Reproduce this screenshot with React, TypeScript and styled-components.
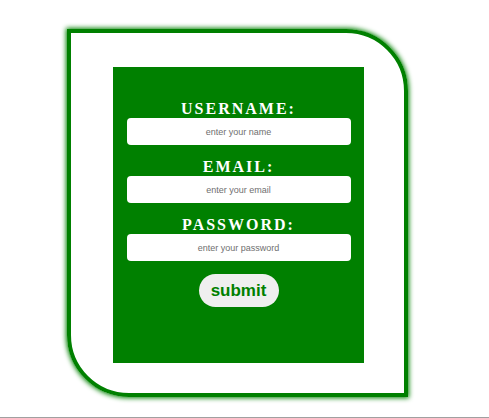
import React from "react";
import styled, { createGlobalStyle } from "styled-components";

const Global = createGlobalStyle`
  html, body { margin: 0; padding: 0; background: #fff; }
  body { font-family: "Liberation Serif", serif; }
`;

const Page = styled.div`
  padding-top: 29px;
  padding-left: 67px;
`;

const Frame = styled.div`
  box-sizing: border-box;
  width: 341px;
  height: 368px;
  border: 4px solid green;
  border-radius: 0 62px 0 62px;
  box-shadow: 0 0 5px 1px green;
  padding: 34px 40px 30px 42px;
`;

const Panel = styled.form`
  box-sizing: border-box;
  width: 251px;
  height: 296px;
  background: #008000;
  padding-top: 33px;
  display: flex;
  flex-direction: column;
  align-items: center;
  margin: 0;
`;

const Label = styled.label<{ $first?: boolean }>`
  display: block;
  font-family: "Liberation Serif", "Times New Roman", serif;
  font-weight: bold;
  font-size: 16px;
  line-height: 18px;
  letter-spacing: 2px;
  color: #fff;
  margin-top: ${(p) => (p.$first ? "0" : "13px")};
  text-align: center;
`;

const Field = styled.input`
  box-sizing: border-box;
  width: 224px;
  height: 27px;
  border: none;
  border-radius: 4px;
  background: #fff;
  text-align: center;
  font-family: "Liberation Sans", Arial, sans-serif;
  font-size: 9px;
  outline: none;
  &::placeholder { color: #6f6f6f; }
`;

const Submit = styled.button`
  margin-top: 13px;
  width: 80px;
  height: 33px;
  border: none;
  border-radius: 17px;
  background: #efefef;
  color: #008000;
  font-family: "Liberation Sans", Arial, sans-serif;
  font-weight: bold;
  font-size: 17px;
  padding: 0;
  cursor: pointer;
`;

const Rule = styled.div`
  margin-top: 20px;
  height: 1px;
  background: #a0a0a0;
`;

export default function App() {
  return (
    <>
      <Global />
      <Page>
        <Frame>
          <Panel onSubmit={(e) => e.preventDefault()}>
            <Label $first>USERNAME:</Label>
            <Field placeholder="enter your name" />
            <Label>EMAIL:</Label>
            <Field placeholder="enter your email" />
            <Label>PASSWORD:</Label>
            <Field type="password" placeholder="enter your password" />
            <Submit type="submit">submit</Submit>
          </Panel>
        </Frame>
      </Page>
      <Rule />
    </>
  );
}
